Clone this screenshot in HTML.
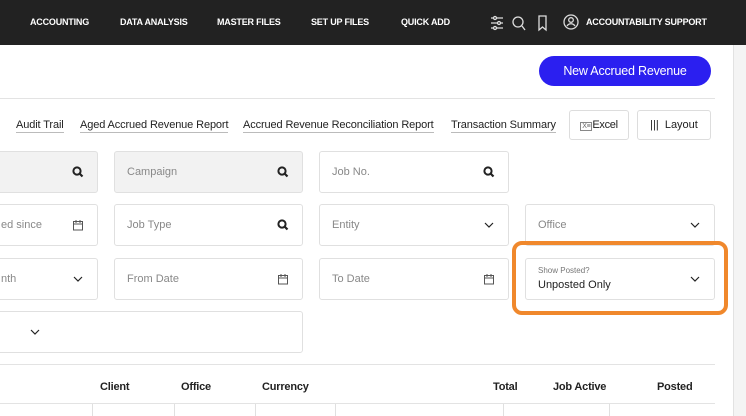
<!DOCTYPE html>
<html><head><style>
*{box-sizing:border-box;margin:0;padding:0}
body{width:746px;height:416px;overflow:hidden;background:#fff;font-family:"Liberation Sans",sans-serif;position:relative;color:#222}
.nav{position:absolute;left:0;top:0;width:746px;height:45px;background:#222}
.nav span{position:absolute;top:17px;color:#fff;font-size:9px;font-weight:bold;letter-spacing:-.2px}
.sb{position:absolute;left:733px;top:45px;width:13px;height:371px;background:#f4f4f4;border-left:1px solid #e2e2e2}
.btn{position:absolute;left:539px;top:56px;width:172px;height:30px;border-radius:15px;background:#2b1ff0;color:#fff;font-size:12.5px;text-align:center;line-height:30px;letter-spacing:-.2px}
.hr{position:absolute;left:0;height:1px;background:#e3e3e3;width:715px}
.lk{position:absolute;top:119px;font-size:11px;color:#222;border-bottom:1px solid #bbb;line-height:13px;letter-spacing:-.12px}
.ob{position:absolute;top:110px;height:30px;border:1px solid #ddd;border-radius:3px;font-size:11px;line-height:28px;text-align:center}
.f{position:absolute;height:42px;border:1px solid #e0e0e0;border-radius:3px;font-size:11px;color:#888;padding:14px 12px}
.g{background:#f2f2f2}
.f svg{position:absolute;right:13px;top:14px}
.th{position:absolute;top:381px;font-size:11px;font-weight:bold;letter-spacing:-.2px}
.vl{position:absolute;top:404px;height:12px;width:1px;background:#e0e0e0}
</style></head><body>
<svg width="0" height="0" style="position:absolute">
<defs>
<symbol id="s" viewBox="0 0 12 12"><circle cx="5" cy="5" r="3.6" fill="none" stroke="#222" stroke-width="2"/><path d="M7.5 7.5l3 3" stroke="#222" stroke-width="2.2"/></symbol>
<symbol id="c" viewBox="0 0 12 12"><rect x="1.5" y="2.5" width="9" height="8.5" fill="none" stroke="#555" stroke-width="1"/><path d="M1.5 5h9M4 1v3M8 1v3" stroke="#555" stroke-width="1"/></symbol>
<symbol id="v" viewBox="0 0 12 12"><path d="M2 4l4 4 4-4" fill="none" stroke="#222" stroke-width="1.2"/></symbol>
</defs></svg>
<div class="nav">
<span style="left:30px">ACCOUNTING</span><span style="left:120px">DATA ANALYSIS</span><span style="left:217px">MASTER FILES</span><span style="left:311px">SET UP FILES</span><span style="left:401px">QUICK ADD</span>
<svg style="position:absolute;left:488px;top:13px" width="60" height="20" fill="none" stroke="#ddd" stroke-width="1.3">
<path d="M3 5h12M3 10h12M3 15h12"/><circle cx="7" cy="5" r="1.5" fill="#222"/><circle cx="11" cy="10" r="1.5" fill="#222"/><circle cx="7" cy="15" r="1.5" fill="#222"/>
<circle cx="30" cy="9" r="5"/><path d="M34 13l3 4"/>
<path d="M51 3h7v14l-3.5-3-3.5 3z"/></svg>
<svg style="position:absolute;left:563px;top:14px" width="16" height="16" fill="none" stroke="#ddd" stroke-width="1.3"><circle cx="8" cy="8" r="7"/><circle cx="8" cy="6" r="2.3"/><path d="M4 12c2-3 6-3 8 0"/></svg>
<span style="left:586px">ACCOUNTABILITY SUPPORT</span>
</div>
<div class="sb"></div>
<div class="btn">New Accrued Revenue</div>
<div class="hr" style="top:98px"></div>
<div class="lk" style="left:16px">Audit Trail</div>
<div class="lk" style="left:80px">Aged Accrued Revenue Report</div>
<div class="lk" style="left:243px">Accrued Revenue Reconciliation Report</div>
<div class="lk" style="left:451px">Transaction Summary</div>
<div class="ob" style="left:569px;width:60px;letter-spacing:-.3px"><span style="font-size:7px;border:1px solid #888;padding:0 1px;color:#666">X≡</span>Excel</div>
<div class="ob" style="left:637px;width:74px">|||&nbsp; Layout</div>

<div class="f g" style="left:-4px;top:151px;width:102px"><svg width="12" height="12"><use href="#s"/></svg></div>
<div class="f g" style="left:114px;top:151px;width:189px">Campaign<svg width="12" height="12"><use href="#s"/></svg></div>
<div class="f" style="left:319px;top:151px;width:190px">Job No.<svg width="12" height="12"><use href="#s"/></svg></div>

<div class="f" style="left:-4px;top:204px;width:102px;padding-left:4px">ed since<svg width="12" height="12"><use href="#c"/></svg></div>
<div class="f" style="left:114px;top:204px;width:189px">Job Type<svg width="12" height="12"><use href="#s"/></svg></div>
<div class="f" style="left:319px;top:204px;width:190px">Entity<svg width="12" height="12"><use href="#v"/></svg></div>
<div class="f" style="left:525px;top:204px;width:190px">Office<svg width="12" height="12"><use href="#v"/></svg></div>

<div class="f" style="left:-4px;top:258px;width:102px;padding-left:4px">nth<svg width="12" height="12"><use href="#v"/></svg></div>
<div class="f" style="left:114px;top:258px;width:189px">From Date<svg width="12" height="12"><use href="#c"/></svg></div>
<div class="f" style="left:319px;top:258px;width:190px">To Date<svg width="12" height="12"><use href="#c"/></svg></div>
<div class="f" style="left:525px;top:258px;width:190px;padding-top:7px"><div style="font-size:8px;color:#777">Show Posted?</div><div style="font-size:11px;color:#222;margin-top:4px">Unposted Only</div><svg width="12" height="12"><use href="#v"/></svg></div>
<div style="position:absolute;left:512px;top:241px;width:216px;height:74px;border:4px solid #f0882c;border-radius:10px"></div>
<div class="f" style="left:-4px;top:311px;width:307px"><svg width="12" height="12" style="left:32px;right:auto"><use href="#v"/></svg></div>

<div class="hr" style="top:364px"></div>
<div class="th" style="left:100px">Client</div><div class="th" style="left:181px">Office</div><div class="th" style="left:262px">Currency</div><div class="th" style="left:493px">Total</div><div class="th" style="left:553px">Job Active</div><div class="th" style="left:657px">Posted</div>
<div class="hr" style="top:403px"></div>
<div class="vl" style="left:92px"></div><div class="vl" style="left:174px"></div><div class="vl" style="left:255px"></div><div class="vl" style="left:335px"></div><div class="vl" style="left:503px"></div><div class="vl" style="left:609px"></div>
</body></html>
